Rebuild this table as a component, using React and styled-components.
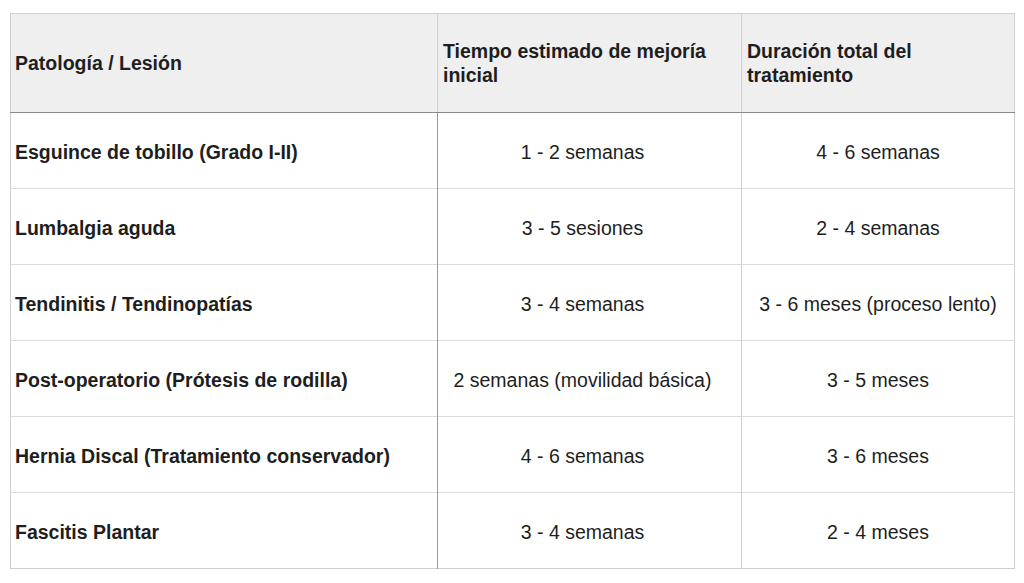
import React from "react";
import styled, { createGlobalStyle } from "styled-components";

const Global = createGlobalStyle`
  html, body { margin: 0; padding: 0; background: #ffffff; }
  body { font-family: "Liberation Sans", Arial, Helvetica, sans-serif; color: #1e1e1e; }
`;

const Page = styled.div`
  padding: 13px 10px 0 10px;
`;

const Table = styled.table`
  width: 1004px;
  border-collapse: collapse;
  table-layout: fixed;
  border: 1px solid #cfcfcf;
  font-size: 19.5px;
`;

const HeadCell = styled.th`
  background: #efefef;
  height: 99px;
  box-sizing: border-box;
  padding: 1px ${(p) => (p.$first ? "4px" : "5px")} 0;
  text-align: left;
  font-weight: bold;
  line-height: 23.5px;
  color: #1e1e1e;
  border-bottom: 1px solid #8a8a8a;
  border-right: 1px solid #d0d0d0;
  vertical-align: middle;
`;

const Row = styled.tr`
  height: 76px;
  border-top: 1px solid #dcdcdc;
`;

const NameCell = styled.td`
  padding: 3px 4px 0;
  font-weight: bold;
  color: #1e1e1e;
  border-right: 1px solid #9a9a9a;
  vertical-align: middle;
`;

const ValueCell = styled.td`
  text-align: center;
  color: #1e1e1e;
  padding: ${(p) => (p.$mid ? "3px 18px 0 4px" : "3px 4px 0")};
  border-right: ${(p) => (p.$mid ? "1px solid #d0d0d0" : "none")};
  vertical-align: middle;
`;

const rows = [
  ["Esguince de tobillo (Grado I-II)", "1 - 2 semanas", "4 - 6 semanas"],
  ["Lumbalgia aguda", "3 - 5 sesiones", "2 - 4 semanas"],
  ["Tendinitis / Tendinopatías", "3 - 4 semanas", "3 - 6 meses (proceso lento)"],
  ["Post-operatorio (Prótesis de rodilla)", "2 semanas (movilidad básica)", "3 - 5 meses"],
  ["Hernia Discal (Tratamiento conservador)", "4 - 6 semanas", "3 - 6 meses"],
  ["Fascitis Plantar", "3 - 4 semanas", "2 - 4 meses"],
];

export default function App() {
  return (
    <Page>
      <Global />
      <Table>
        <colgroup>
          <col style={{ width: 427 }} />
          <col style={{ width: 304 }} />
          <col style={{ width: 273 }} />
        </colgroup>
        <thead>
          <tr>
            <HeadCell $first>Patología / Lesión</HeadCell>
            <HeadCell>Tiempo estimado de mejoría inicial</HeadCell>
            <HeadCell>Duración total del tratamiento</HeadCell>
          </tr>
        </thead>
        <tbody>
          {rows.map((r) => (
            <Row key={r[0]}>
              <NameCell>{r[0]}</NameCell>
              <ValueCell $mid>{r[1]}</ValueCell>
              <ValueCell>{r[2]}</ValueCell>
            </Row>
          ))}
        </tbody>
      </Table>
    </Page>
  );
}
